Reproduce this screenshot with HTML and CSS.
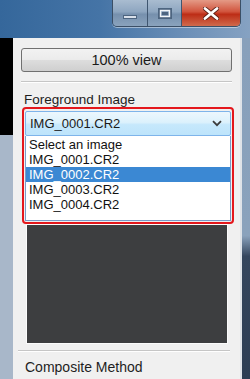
FILE: index.html
```html
<!DOCTYPE html>
<html lang="en">
<head>
  <meta charset="UTF-8">
  <meta name="viewport" content="width=device-width, initial-scale=1.0">
  <title>Composite</title>
  <link rel="stylesheet" href="styles.css">
</head>
<body>
  <div class="window">
    <div class="titlebar">
      <div class="controls">
        <div class="ctl min-btn">
          <svg width="14" height="4" viewBox="0 0 14 4"><rect x="0.5" y="0.5" width="13" height="3" fill="#d8e0ea" stroke="#4d6580" stroke-width="1"/></svg>
        </div>
        <div class="ctl max-btn">
          <svg width="14" height="11" viewBox="0 0 14 11"><rect x="1" y="1" width="12" height="9" fill="none" stroke="#4d6580" stroke-width="2"/><rect x="2.5" y="2.5" width="9" height="6" fill="none" stroke="#f2f5f8" stroke-width="1.4"/><rect x="4" y="4" width="6" height="3" fill="#4d6580"/></svg>
        </div>
        <div class="ctl close-btn">
          <svg width="16" height="13" viewBox="0 0 16 13"><path d="M2 1.5 L14 11.5 M14 1.5 L2 11.5" stroke="#5a1e14" stroke-width="4.4" stroke-linecap="round"/><path d="M2 1.5 L14 11.5 M14 1.5 L2 11.5" stroke="#ffffff" stroke-width="2.8" stroke-linecap="round"/></svg>
        </div>
      </div>
    </div>

    <div class="frame">
      <div class="left-edge">
        <div class="black-part"></div>
      </div>

      <div class="panel">
        <button class="view-btn">100% view</button>
        <div class="sep"></div>

        <div class="label">Foreground Image</div>
        <div class="highlight-box">
          <div class="select">
            <span>IMG_0001.CR2</span>
            <svg width="10" height="7" viewBox="0 0 10 7"><path d="M1 1.2 L5 5.2 L9 1.2" fill="none" stroke="#3c3c3c" stroke-width="1.8"/></svg>
          </div>
          <ul class="options">
            <li>Select an image</li>
            <li>IMG_0001.CR2</li>
            <li class="selected">IMG_0002.CR2</li>
            <li>IMG_0003.CR2</li>
            <li>IMG_0004.CR2</li>
          </ul>
        </div>
        <div class="preview"></div>

        <div class="sep sep-low"></div>
        <div class="label label-low">Composite Method</div>
      </div>

      <div class="right-edge"></div>
    </div>
  </div>
</body>
</html>
```

FILE: styles.css
```css
body {
  margin: 0;
  padding: 0;
  font-family: "Liberation Sans", Arial, sans-serif;
}
.window {
  width: 250px;
  height: 379px;
  overflow: hidden;
  background: #7d98b6;
}
.titlebar {
  height: 38px;
  display: flex;
  justify-content: flex-end;
  background: linear-gradient(to right, #35679b 0%, #4574a6 40%, #6d90b8 75%, #86a2c2 100%);
}
.controls {
  display: flex;
  height: 26px;
  margin-right: 9px;
  border: 1px solid #3b4f66;
  border-top: none;
  border-radius: 0 0 5px 5px;
  overflow: hidden;
  box-shadow: 0 1px 0 rgba(255, 255, 255, 0.45);
}
.ctl {
  display: flex;
  align-items: center;
  justify-content: center;
}
.min-btn {
  width: 35px;
  align-items: flex-end;
  padding-bottom: 7px;
  box-sizing: border-box;
  background: linear-gradient(to bottom, #a9bcd0 0%, #8ea6c0 45%, #7690ad 55%, #8aa3bd 100%);
  border-right: 1px solid #3f5670;
}
.max-btn {
  width: 33px;
  background: linear-gradient(to bottom, #a9bcd0 0%, #8ea6c0 45%, #7690ad 55%, #8aa3bd 100%);
  border-right: 1px solid #3f5670;
}
.close-btn {
  width: 58px;
  background: linear-gradient(to bottom, #e49a86 0%, #d1543d 45%, #bd2d16 55%, #d06a4c 100%);
}
.frame {
  display: flex;
  height: 341px;
}
.left-edge {
  width: 13px;
  background: #a8b7c9;
}
.black-part {
  height: 97px;
  background: #000;
}
.panel {
  width: 227px;
  background: #f0f0f0;
  padding: 10px 0 0 0;
  box-sizing: border-box;
}
.right-edge {
  width: 10px;
  border-left: 2px solid #dfe3e8;
  box-sizing: border-box;
  background: linear-gradient(to bottom, #88a0bb 0%, #8aa2bc 58%, #34465e 64%, #2c3d54 100%);
}
.view-btn {
  display: block;
  width: 211px;
  height: 24px;
  margin-left: 8px;
  border: 1px solid #707070;
  border-radius: 3px;
  background: linear-gradient(to bottom, #f2f2f2 0%, #ebebeb 50%, #dddddd 51%, #cfcfcf 100%);
  font-family: "Liberation Sans", Arial, sans-serif;
  font-size: 14.5px;
  color: #1a1a1a;
  padding: 0;
}
.sep {
  height: 1px;
  margin: 9px 8px 0 8px;
  background: #c6c6c6;
  border-bottom: 1px solid #ffffff;
}
.label {
  margin: 9px 0 0 11px;
  font-size: 13.5px;
  line-height: 15px;
  color: #1e1e1e;
}
.highlight-box {
  margin: 0 0 0 9px;
  width: 212px;
  height: 117px;
  box-sizing: border-box;
  border: 2px solid #e4171c;
  border-radius: 4px;
  padding: 2px 1px 0 1px;
}
.select {
  height: 25px;
  box-sizing: border-box;
  border: 1px solid #7eb4ea;
  border-radius: 2px;
  background: linear-gradient(to bottom, #ecf7fd 0%, #dcf1fc 45%, #c6e8fc 55%, #bde4fb 100%);
  display: flex;
  align-items: center;
  justify-content: space-between;
  padding: 0 8px 0 4px;
  font-size: 13px;
  color: #1a1a1a;
}
.options {
  list-style: none;
  margin: 0;
  padding: 1px 0 0 0;
  height: 85px;
  box-sizing: border-box;
  background: #fff;
  border: 1px solid #7a9bc7;
  border-top: none;
  font-size: 13px;
  color: #111;
}
.options li {
  height: 15px;
  line-height: 15px;
  padding-left: 3px;
}
.options .selected {
  background: #3b88d3;
  color: #fff;
}
.preview {
  margin-left: 13px;
  width: 202px;
  height: 120px;
  background: #3d3e40;
  border: 1px solid #fbfbfb;
  box-sizing: border-box;
}
.sep-low {
  margin: 6px 10px 0 5px;
}
.label-low {
  margin: 8px 0 0 12px;
  font-size: 14px;
  line-height: 15px;
}
```
